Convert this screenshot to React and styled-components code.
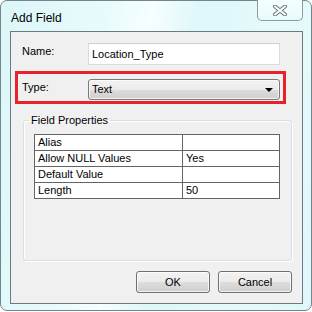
import React from "react";
import styled, { createGlobalStyle } from "styled-components";

const Global = createGlobalStyle`
  html, body {
    margin: 0;
    padding: 0;
    background: #ffffff;
  }
  body {
    font-family: "Liberation Sans", Arial, sans-serif;
    font-size: 11px;
    color: #000;
  }
`;

const Frame = styled.div`
  box-sizing: border-box;
  width: 312px;
  height: 311px;
  border: 1px solid #72858c;
  border-radius: 7px;
  background: linear-gradient(100deg, #dcf6f8 0%, #e8fbfc 30%, #f6fefe 42%, #def7f9 55%, #e6fafb 80%, #dff7f9 100%);
  display: flex;
  flex-direction: column;
  padding: 0 8px 6px 9px;
`;

const TitleBar = styled.div`
  height: 30px;
  display: flex;
  justify-content: space-between;
  align-items: flex-start;
`;

const Title = styled.div`
  font-size: 12px;
  padding: 10px 0 0 1px;
  color: #000;
`;

const CloseButton = styled.div`
  box-sizing: border-box;
  width: 46px;
  height: 21px;
  margin-top: -1px;
  border: 1px solid #8a9ca2;
  border-top: none;
  border-radius: 0 0 5px 5px;
  background: linear-gradient(180deg, #f4fefe 0%, #e9fafb 100%);
  display: flex;
  align-items: center;
  justify-content: center;
  padding-top: 1px;
`;

const Client = styled.div`
  flex: 1;
  box-sizing: border-box;
  border: 1px solid #6a7a80;
  background: #f0f0f0;
  display: flex;
  flex-direction: column;
`;

const Row = styled.div`
  display: flex;
  align-items: flex-start;
`;

const NameRow = styled(Row)`
  margin: 11px 0 0 11px;
`;

const Label = styled.div`
  width: 66px;
  padding-top: 2px;
  line-height: 13px;
`;

const TextInput = styled.div`
  box-sizing: border-box;
  width: 192px;
  height: 22px;
  background: #fff;
  border: 1px solid #dadada;
  border-top-color: #cfcfcf;
  padding: 4px 0 0 3px;
  line-height: 13px;
`;

const Highlight = styled.div`
  box-sizing: border-box;
  width: 271px;
  margin: 6px 0 0 4px;
  border: 3px solid #e8212b;
  padding: 5px 0 1px 4px;
`;

const Select = styled.div`
  box-sizing: border-box;
  width: 192px;
  height: 21px;
  border: 1px solid #7a7a7a;
  border-radius: 3px;
  background: linear-gradient(180deg, #f2f2f2 0%, #ebebeb 50%, #dddddd 51%, #cfcfcf 100%);
  box-shadow: inset 0 0 0 1px rgba(255, 255, 255, 0.7);
  display: flex;
  align-items: center;
  justify-content: space-between;
  padding: 0 6px 0 3px;
  line-height: 13px;
`;

const Arrow = styled.div`
  width: 0;
  height: 0;
  border-left: 4px solid transparent;
  border-right: 4px solid transparent;
  border-top: 4px solid #000;
`;

const Group = styled.fieldset`
  box-sizing: border-box;
  width: 269px;
  height: 147px;
  margin: 10px 0 0 12px;
  padding: 7px 0 0 10px;
  border: 1px solid #d5dfe5;
  box-shadow: inset 1px 1px 0 #fff, 1px 1px 0 #fff;
  border-radius: 3px;
  min-width: 0;
`;

const Legend = styled.legend`
  padding: 0 2px;
  margin-left: -5px;
  line-height: 13px;
`;

const Table = styled.table`
  width: 246px;
  border-collapse: collapse;
  background: #fff;
  table-layout: fixed;
`;

const Cell = styled.td`
  border: 1px solid #646464;
  height: 15px;
  padding: 0 0 0 3px;
  line-height: 15px;
  width: ${(p) => (p.$key ? "144px" : "auto")};
  white-space: nowrap;
`;

const Buttons = styled.div`
  display: flex;
  justify-content: flex-end;
  gap: 8px;
  margin: 10px 10px 0 0;
`;

const Button = styled.div`
  box-sizing: border-box;
  width: 74px;
  height: 22px;
  border: 1px solid #707070;
  border-radius: 3px;
  background: linear-gradient(180deg, #f2f2f2 0%, #ebebeb 50%, #dddddd 51%, #cfcfcf 100%);
  box-shadow: inset 0 0 0 1px rgba(255, 255, 255, 0.75);
  display: flex;
  align-items: center;
  justify-content: center;
  line-height: 13px;
`;

const props = [
  ["Alias", ""],
  ["Allow NULL Values", "Yes"],
  ["Default Value", ""],
  ["Length", "50"],
];

const CloseIcon = () => (
  <svg width="14" height="11" viewBox="0 0 14 11">
    <path d="M2 1.5 L12 9.5 M12 1.5 L2 9.5" stroke="#6d7b80" strokeWidth="4" strokeLinecap="round" fill="none" />
    <path d="M2 1.5 L12 9.5 M12 1.5 L2 9.5" stroke="#ffffff" strokeWidth="2" strokeLinecap="round" fill="none" />
  </svg>
);

export default function App() {
  return (
    <>
      <Global />
      <Frame>
        <TitleBar>
          <Title>Add Field</Title>
          <CloseButton>
            <CloseIcon />
          </CloseButton>
        </TitleBar>
        <Client>
          <NameRow>
            <Label>Name:</Label>
            <TextInput>Location_Type</TextInput>
          </NameRow>
          <Highlight>
            <Row>
              <Label>Type:</Label>
              <Select>
                <span>Text</span>
                <Arrow />
              </Select>
            </Row>
          </Highlight>
          <Group>
            <Legend>Field Properties</Legend>
            <Table>
              <tbody>
                {props.map(([k, v]) => (
                  <tr key={k}>
                    <Cell $key>{k}</Cell>
                    <Cell>{v}</Cell>
                  </tr>
                ))}
              </tbody>
            </Table>
          </Group>
          <Buttons>
            <Button>OK</Button>
            <Button>Cancel</Button>
          </Buttons>
        </Client>
      </Frame>
    </>
  );
}
